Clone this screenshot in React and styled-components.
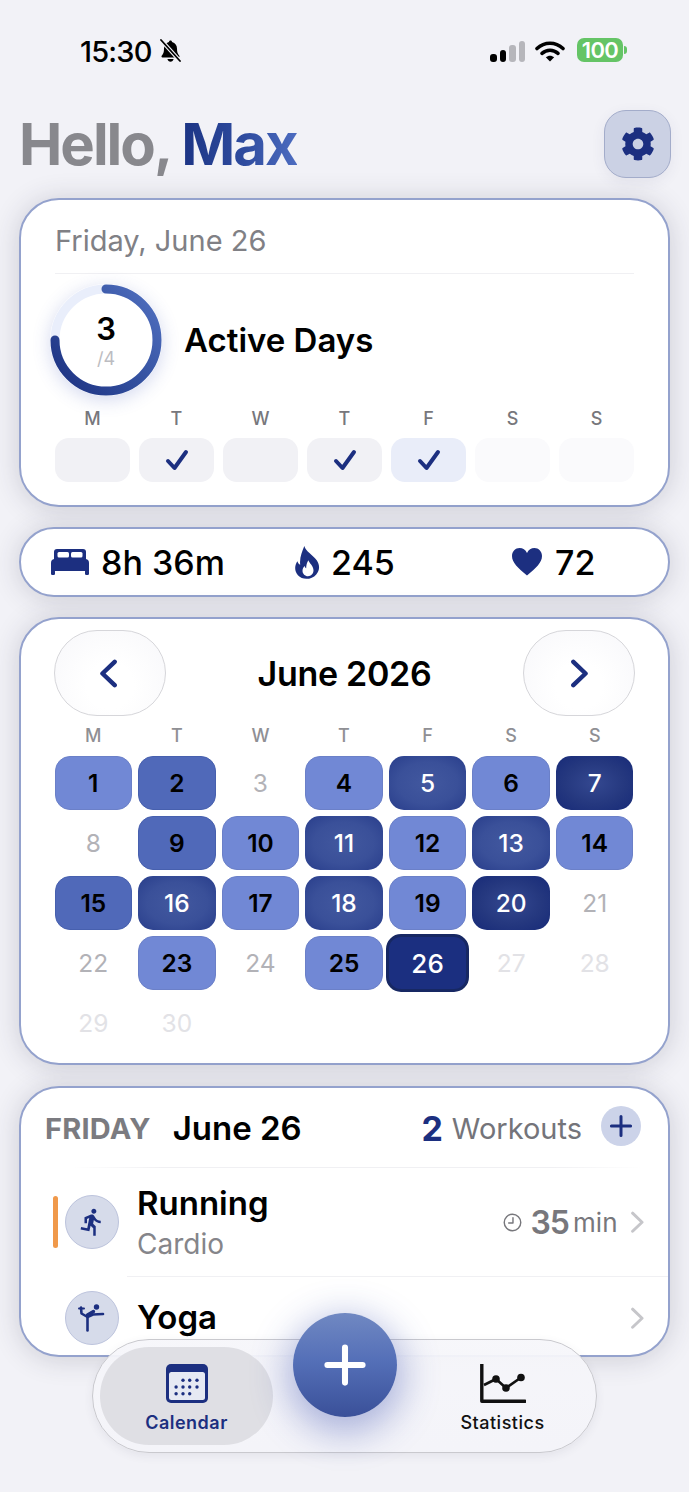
import React from "react";
import styled, { createGlobalStyle } from "styled-components";
import { FaCog } from "react-icons/fa";
import { MdDirectionsRun } from "react-icons/md";

const Global = createGlobalStyle`
  html, body { margin: 0; padding: 0; background: #f2f2f7; }
  * { box-sizing: border-box; }
  body { font-family: Inter, "Liberation Sans", sans-serif; }
`;

const NAVY = "#1c2f80";

const Page = styled.div`
  position: relative;
  width: 689px;
  height: 1492px;
  overflow: hidden;
  background: #f2f2f7;
  padding: 0 19px;
`;

const StatusBar = styled.div`
  height: 110px;
  margin: 0 -19px;
  padding: 35px 66px 0 80px;
  display: flex;
  justify-content: space-between;
  align-items: flex-start;
`;
const StatusLeft = styled.div`
  display: flex;
  align-items: center;
  gap: 7px;
  height: 32px;
`;
const Clock = styled.span`
  font-size: 29px;
  font-weight: 500;
  letter-spacing: -0.8px;
  color: #000;
`;
const StatusRight = styled.div`
  display: flex;
  align-items: center;
  height: 32px;
  gap: 10px;
`;
const Signal = styled.div`
  display: flex;
  align-items: flex-end;
  gap: 3px;
  height: 21px;
  margin-top: 1px;
`;
const SignalBar = styled.i`
  display: block;
  width: 6.5px;
  border-radius: 3px;
  height: ${(p) => p.$h}px;
  background: ${(p) => (p.$on ? "#000" : "#b6b6bb")};
`;
const Battery = styled.div`
  position: relative;
  width: 46px;
  height: 24px;
  margin-left: 2px;
  margin-top: -2px;
  border-radius: 7px;
  background: #65c466;
  color: #fff;
  font-size: 22px;
  font-weight: 600;
  letter-spacing: -0.6px;
  display: flex;
  align-items: center;
  justify-content: center;
  &::after {
    content: "";
    position: absolute;
    right: -4px;
    top: 8px;
    width: 3px;
    height: 8px;
    border-radius: 0 3px 3px 0;
    background: #65c466;
  }
`;

const Header = styled.header`
  display: flex;
  align-items: center;
  justify-content: space-between;
  height: 68px;
  margin: 0 -1px 20px 0;
`;
const Title = styled.h1`
  margin: 0;
  font-size: 58px;
  font-weight: 700;
  line-height: 68px;
  letter-spacing: -2px;
  color: #88888d;
`;
const Name = styled.span`
  background: linear-gradient(90deg, #1c3484 0%, #2f4c9f 55%, #4d6cc0 100%);
  -webkit-background-clip: text;
  background-clip: text;
  color: transparent;
`;
const GearButton = styled.div`
  width: 67px;
  height: 68px;
  border-radius: 22px;
  background: #cbd1e4;
  border: 1.5px solid #a3acca;
  box-shadow: 0 4px 14px rgba(60, 70, 120, 0.08);
  color: ${NAVY};
  display: flex;
  align-items: center;
  justify-content: center;
`;

const Card = styled.section`
  background: #fff;
  border: 2px solid #94a2cd;
  border-radius: ${(p) => p.$radius || 40}px;
  box-shadow: 0 2px 28px rgba(40, 40, 70, 0.19);
  margin-bottom: 20px;
`;

const SummaryCard = styled(Card)`
  padding: 25px 34px 23px;
  height: 309px;
`;
const DateLine = styled.div`
  font-size: 29px;
  line-height: 32px;
  color: #808085;
`;
const Rule = styled.div`
  height: 1px;
  margin-top: 16px;
  background: #f0f0f3;
`;
const RingRow = styled.div`
  display: flex;
  align-items: center;
  gap: 22px;
  margin: 10px 0 0 -5px;
  height: 112px;
`;
const RingBox = styled.div`
  position: relative;
  width: 112px;
  height: 112px;
  border-radius: 50%;
  box-shadow: 0 4px 18px rgba(60, 80, 180, 0.22);
`;
const RingText = styled.div`
  position: absolute;
  inset: 0;
  padding-top: 3px;
  display: flex;
  flex-direction: column;
  align-items: center;
  justify-content: center;
`;
const RingNum = styled.div`
  font-size: 31px;
  font-weight: 600;
  line-height: 30px;
  color: #000;
`;
const RingOf = styled.div`
  font-size: 18px;
  line-height: 20px;
  margin-top: 5px;
  color: #bcbcc1;
`;
const ActiveLabel = styled.div`
  font-size: 33px;
  font-weight: 600;
  color: #000;
`;
const WeekLabels = styled.div`
  display: grid;
  grid-template-columns: repeat(7, 1fr);
  column-gap: 9px;
  margin-top: 13px;
`;
const WeekLabel = styled.div`
  text-align: center;
  font-size: 18px;
  line-height: 20px;
  font-weight: 500;
  color: ${(p) => p.$color || "#77777c"};
`;
const WeekBoxes = styled.div`
  display: grid;
  grid-template-columns: repeat(7, 1fr);
  column-gap: 9px;
  margin-top: 9px;
`;
const WeekBox = styled.div`
  height: 44px;
  border-radius: 14px;
  background: ${(p) => p.$bg};
  display: flex;
  align-items: center;
  justify-content: center;
`;

const StatsCard = styled(Card)`
  height: 70px;
  padding-left: 30px;
  display: grid;
  grid-template-columns: 244px 217px 1fr;
  align-items: center;
`;
const Stat = styled.div`
  display: flex;
  align-items: center;
  gap: ${(p) => p.$gap}px;
`;
const StatValue = styled.span`
  font-size: 34px;
  font-weight: 500;
  color: #000;
`;

const CalendarCard = styled(Card)`
  height: 448px;
  padding: 11px 33px 0;
`;
const CalendarHead = styled.div`
  display: flex;
  align-items: center;
  justify-content: space-between;
`;
const NavButton = styled.div`
  width: 112px;
  height: 86px;
  border-radius: 44px;
  padding: ${(p) => (p.$left ? "0 4px 0 0" : "0 0 0 2px")};
  background: radial-gradient(ellipse at 50% 65%, #fff 30%, #f7f7fa 100%);
  border: 1px solid #d6d6da;
  display: flex;
  align-items: center;
  justify-content: center;
`;
const Month = styled.div`
  font-size: 34px;
  font-weight: 600;
  letter-spacing: -0.3px;
  color: #000;
`;
const DayLabels = styled.div`
  display: grid;
  grid-template-columns: repeat(7, 1fr);
  column-gap: 6px;
  margin: 10px 1.5px 10px 0.5px;
`;
const DayGrid = styled.div`
  display: grid;
  grid-template-columns: repeat(7, 1fr);
  gap: 6px;
  grid-auto-rows: 54px;
  margin: 0 1.5px 0 0.5px;
`;
const tones = {
  none: "background: transparent; color: #b2b2b7; font-weight: 400;",
  future: "background: transparent; color: #e2e2e6; font-weight: 400;",
  light:
    "background: #7188d5; border: 1.5px solid #6b80c8; color: #000; font-weight: 600;",
  mid: "background: #5069b9; border: 1.5px solid #4760ae; color: #000; font-weight: 600;",
  dark: "background: radial-gradient(ellipse at 50% 50%, #42589f 0%, #3a5099 55%, #283d8b 100%); color: #fff; font-weight: 500;",
  deep: "background: radial-gradient(ellipse at 50% 50%, #344890 0%, #25387f 55%, #172a78 100%); color: #fff; font-weight: 500;",
  today:
    "background: #1b2f80; border: 3.5px solid #172863; color: #fff; font-weight: 500; font-size: 26px; margin: -2px -2.5px;",
};
const Day = styled.div`
  border-radius: 15px;
  display: flex;
  align-items: center;
  justify-content: center;
  font-size: 24.5px;
  ${(p) => tones[p.$tone]}
`;

const WorkoutCard = styled(Card)`
  position: relative;
  height: 271px;
  overflow: hidden;
  margin-bottom: 0;
  margin-top: 21px;
`;
const WorkoutHead = styled.div`
  display: flex;
  align-items: center;
  height: 40px;
  margin: 18px 27px 21px 24px;
`;
const Weekday = styled.span`
  font-size: 29px;
  font-weight: 700;
  letter-spacing: 0.2px;
  color: #7b7b80;
  margin: 4px 22px 0 0;
`;
const WorkoutDate = styled.span`
  font-size: 33px;
  font-weight: 600;
  color: #000;
  margin-top: 4px;
`;
const Count = styled.span`
  margin: 4px 9px 0 auto;
  font-size: 34px;
  font-weight: 700;
  color: ${NAVY};
`;
const CountLabel = styled.span`
  font-size: 29px;
  color: #74747a;
  margin: 4px 19px 0 0;
`;
const AddMini = styled.div`
  width: 40px;
  height: 40px;
  border-radius: 50%;
  background: #ccd3e9;
  display: flex;
  align-items: center;
  justify-content: center;
`;
const FadeRule = styled.div`
  height: 1px;
  background: linear-gradient(90deg, transparent 8%, #f0f0f3 22%, #f0f0f3 82%, transparent 96%);
`;
const Row = styled.div`
  display: flex;
  align-items: center;
  height: ${(p) => p.$h}px;
  padding: 0 23px 0 32px;
`;
const RowRule = styled.div`
  height: 1px;
  margin-left: 106px;
  background: #f0f0f3;
`;
const Accent = styled.div`
  width: 5px;
  height: 52px;
  border-radius: 3px;
  margin-right: 7px;
  background: ${(p) => p.$color};
`;
const WorkoutIcon = styled.div`
  width: 54px;
  height: 54px;
  border-radius: 50%;
  background: #d6dbea;
  border: 1.5px solid #bcc3dc;
  display: flex;
  align-items: center;
  justify-content: center;
  margin-right: 18px;
  color: ${NAVY};
`;
const RowText = styled.div`
  flex: 1;
  margin-top: ${(p) => p.$shift}px;
`;
const RowName = styled.div`
  font-size: 33px;
  line-height: 40px;
  font-weight: 600;
  color: #000;
`;
const RowSub = styled.div`
  font-size: 28px;
  line-height: 38px;
  margin-top: 2px;
  color: #85858a;
`;
const Duration = styled.div`
  display: flex;
  align-items: center;
  gap: 8px;
  margin-right: 12px;
`;
const DurationNum = styled.span`
  font-size: 32px;
  font-weight: 600;
  letter-spacing: -0.9px;
  color: #77777c;
`;
const DurationUnit = styled.span`
  font-size: 26px;
  color: #77777c;
  margin-left: -4px;
`;

const BottomNav = styled.nav`
  position: absolute;
  left: 92px;
  top: 1339px;
  width: 505px;
  height: 114px;
  border-radius: 57px;
  padding: 7px;
  display: flex;
  justify-content: space-between;
  background: linear-gradient(180deg, rgba(246, 246, 250, 0.94), rgba(244, 244, 249, 0.97));
  border: 1px solid #c9c9ce;
  box-shadow: 0 3px 10px rgba(60, 60, 90, 0.08);
`;
const Tab = styled.div`
  width: 173px;
  height: 98px;
  border-radius: 49px;
  padding-top: 17px;
  display: flex;
  flex-direction: column;
  align-items: center;
  background: ${(p) => (p.$active ? "#dfdfe4" : "transparent")};
`;
const TabLabel = styled.div`
  margin-top: 9px;
  font-size: 18px;
  line-height: 22px;
  font-weight: ${(p) => (p.$active ? 600 : 500)};
  letter-spacing: 0.5px;
  color: ${(p) => (p.$active ? NAVY : "#111")};
`;
const Fab = styled.div`
  position: absolute;
  left: 200px;
  top: -27px;
  width: 104px;
  height: 104px;
  border-radius: 50%;
  background: linear-gradient(180deg, #7088c2 0%, #5570b8 45%, #3a5099 100%);
  box-shadow: 0 10px 36px 6px rgba(50, 70, 170, 0.38);
  display: flex;
  align-items: center;
  justify-content: center;
`;

const Chevron = ({ dir, color = NAVY, w = 20, h = 29, sw = 4 }) => (
  <svg width={w} height={h} viewBox="0 0 18 26" fill="none">
    <path
      d={dir === "left" ? "M15 2.5 4 13l11 10.5" : "M3 2.5 14 13 3 23.5"}
      stroke={color}
      strokeWidth={sw}
      strokeLinecap="round"
      strokeLinejoin="round"
    />
  </svg>
);

const Check = () => (
  <svg width="24" height="22" viewBox="0 0 24 22" fill="none">
    <path d="M3 12l6.5 7L21 3" stroke={NAVY} strokeWidth="4" strokeLinecap="round" strokeLinejoin="round" />
  </svg>
);

const Plus = ({ size, sw, color }) => (
  <svg width={size} height={size} viewBox="0 0 40 40" fill="none">
    <path d="M20 4v32M4 20h32" stroke={color} strokeWidth={sw} strokeLinecap="round" />
  </svg>
);

const BellOff = () => (
  <svg width="23" height="24" viewBox="0 0 23 24">
    <path d="M11.5 1.5c-.9 0-1.5.6-1.6 1.5C6.8 3.8 5 6.4 5 9.6c0 3.6-.6 5.4-2.3 7.2-.5.6-.2 1.6.7 1.6h16.2c.9 0 1.2-1 .7-1.6-1.7-1.8-2.3-3.6-2.3-7.2 0-3.2-1.8-5.8-4.9-6.6-.1-.9-.7-1.5-1.6-1.5z" fill="#000" />
    <path d="M8.4 20c.3 1.5 1.6 2.7 3.1 2.7s2.8-1.2 3.1-2.7z" fill="#000" />
    <path d="M2 1l19 21" stroke="#f2f2f7" strokeWidth="4" />
    <path d="M2 1l19 21" stroke="#000" strokeWidth="1.8" strokeLinecap="round" />
  </svg>
);

const Wifi = () => (
  <svg width="30" height="22" viewBox="0 0 30 22" fill="none">
    <path d="M2 8.5C9.5 1.5 20.5 1.5 28 8.5" stroke="#000" strokeWidth="3.6" strokeLinecap="round" />
    <path d="M7 13.3C11.7 9.2 18.3 9.2 23 13.3" stroke="#000" strokeWidth="3.6" strokeLinecap="round" />
    <path d="M10.8 17.2c2.5-2.1 5.9-2.1 8.4 0L15 21.5z" fill="#000" />
  </svg>
);

const Ring = () => (
  <svg width="112" height="112" viewBox="0 0 112 112" fill="none">
    <defs>
      <linearGradient id="ringGrad" x1="0" y1="1" x2="1" y2="0.2">
        <stop offset="0" stopColor="#1c3080" />
        <stop offset="0.55" stopColor="#33509f" />
        <stop offset="1" stopColor="#4c6bbb" />
      </linearGradient>
    </defs>
    <circle cx="56" cy="56" r="51" stroke="#e9eefb" strokeWidth="9" />
    <path d="M56 5A51 51 0 1 1 5 56" stroke="url(#ringGrad)" strokeWidth="9" strokeLinecap="round" />
  </svg>
);

const Bed = () => (
  <svg width="38" height="26" viewBox="0 0 38 26">
    <path d="M6 0h26a3 3 0 0 1 3 3v8H3V3a3 3 0 0 1 3-3z" fill={NAVY} />
    <rect x="6.5" y="3" width="11.5" height="5.5" rx="1.5" fill="#fff" />
    <rect x="20" y="3" width="11.5" height="5.5" rx="1.5" fill="#fff" />
    <path d="M4 10h30a4 4 0 0 1 4 4v8H0v-8a4 4 0 0 1 4-4z" fill={NAVY} />
    <rect x="0" y="21" width="4" height="5" rx="1.2" fill={NAVY} />
    <rect x="34" y="21" width="4" height="5" rx="1.2" fill={NAVY} />
  </svg>
);

const Flame = () => (
  <svg width="26" height="33" viewBox="0 0 28 36">
    <path d="M10 0c1.5 6 9 9.5 13.5 15.5 3.5 5 3.5 11-.5 15.5-5 6-15 6.500-20 1C-1 27.500-.8 21 2.500 16.500c.6 2 1.500 3.200 3 4C4.500 13 7.500 6.500 10 0z" fill={NAVY} />
    <path d="M14.500 15.500c.5 3 5.500 6 5.500 11 0 3.800-2.800 6.500-6 6.500s-6-2.600-6-6c0-2.300 1-4 2.500-5.300.2 1.300.7 2.100 1.500 2.600 0-3.200.8-6.300 2.500-8.800z" fill="#fff" />
  </svg>
);

const Heart = () => (
  <svg width="30" height="28" viewBox="0 0 30 28">
    <path d="M15 27.5C6 20 0 14.5 0 8 0 3.5 3.5 0 7.5 0 10.8 0 13.5 1.8 15 5 16.5 1.8 19.2 0 22.5 0 26.5 0 30 3.5 30 8c0 6.5-6 12-15 19.5z" fill={NAVY} />
  </svg>
);

const ClockIcon = () => (
  <svg width="19" height="19" viewBox="0 0 20 20" fill="none">
    <circle cx="10" cy="10" r="8.7" stroke="#77777c" strokeWidth="1.5" />
    <path d="M10.5 5v5.5H6" stroke="#77777c" strokeWidth="1.5" strokeLinecap="round" strokeLinejoin="round" />
  </svg>
);

const YogaIcon = () => (
  <svg width="28" height="28" viewBox="0 0 28 28" fill="none">
    <circle cx="18.5" cy="3" r="2.7" fill={NAVY} />
    <path d="M9.5 11v15.500" stroke={NAVY} strokeWidth="2.6" strokeLinecap="round" />
    <path d="M3 3.5 3.5 9.5 9.5 13 15 10.5 25 10" stroke={NAVY} strokeWidth="2.6" strokeLinecap="round" strokeLinejoin="round" />
    <path d="M9.5 11 15.5 7.5" stroke={NAVY} strokeWidth="3.4" strokeLinecap="round" />
    <path d="M1 4.5h5" stroke={NAVY} strokeWidth="2" strokeLinecap="round" />
  </svg>
);

const CalendarIcon = () => {
  const dots = [
    [17, 16.2], [23.7, 16.2], [31, 16.2],
    [10.1, 23], [17, 23], [23.7, 23], [31, 23],
    [10.1, 29.8], [17, 29.8], [23.7, 29.8],
  ];
  return (
    <svg width="42" height="39" viewBox="0 0 42 39">
      <rect x="0" y="0" width="42" height="39" rx="5" fill={NAVY} />
      <rect x="3" y="8" width="36" height="28" rx="2.5" fill="#e6e9f3" />
      {dots.map(([x, y]) => (
        <circle key={`${x}-${y}`} cx={x} cy={y} r="1.7" fill={NAVY} />
      ))}
    </svg>
  );
};

const ChartIcon = () => (
  <svg width="46" height="39" viewBox="0 0 46 39" fill="none">
    <path d="M1.8 0v37.2H45" stroke="#111" strokeWidth="3.4" strokeLinecap="round" strokeLinejoin="round" />
    <path d="M4 21 16 15 26 24 41 13.5" stroke="#111" strokeWidth="2.6" strokeLinejoin="round" />
    <circle cx="16" cy="15" r="3.8" fill="#111" />
    <circle cx="26" cy="24" r="3.8" fill="#111" />
    <circle cx="41" cy="13.5" r="3.8" fill="#111" />
  </svg>
);

const WEEK = ["M", "T", "W", "T", "F", "S", "S"];
const WEEK_STATE = [
  { bg: "#f1f1f5" },
  { bg: "#f1f1f5", check: true },
  { bg: "#f1f1f5" },
  { bg: "#f1f1f5", check: true },
  { bg: "#e9edf9", check: true },
  { bg: "#fafafc" },
  { bg: "#fafafc" },
];
const DAYS = [
  "light", "mid", "none", "light", "dark", "light", "deep",
  "none", "mid", "light", "dark", "light", "dark", "light",
  "mid", "dark", "light", "dark", "light", "deep", "none",
  "none", "light", "none", "light", "today", "future", "future",
  "future", "future",
];

export default function App() {
  return (
    <Page>
      <Global />
      <StatusBar>
        <StatusLeft>
          <Clock>15:30</Clock>
          <BellOff />
        </StatusLeft>
        <StatusRight>
          <Signal>
            {[8, 12, 17, 21].map((h, i) => (
              <SignalBar key={h} $h={h} $on={i < 2} />
            ))}
          </Signal>
          <Wifi />
          <Battery>100</Battery>
        </StatusRight>
      </StatusBar>

      <Header>
        <Title>
          Hello, <Name>Max</Name>
        </Title>
        <GearButton>
          <FaCog size={34} />
        </GearButton>
      </Header>

      <SummaryCard>
        <DateLine>Friday, June 26</DateLine>
        <Rule />
        <RingRow>
          <RingBox>
            <Ring />
            <RingText>
              <RingNum>3</RingNum>
              <RingOf>/4</RingOf>
            </RingText>
          </RingBox>
          <ActiveLabel>Active Days</ActiveLabel>
        </RingRow>
        <WeekLabels>
          {WEEK.map((d, i) => (
            <WeekLabel key={i}>{d}</WeekLabel>
          ))}
        </WeekLabels>
        <WeekBoxes>
          {WEEK_STATE.map((s, i) => (
            <WeekBox key={i} $bg={s.bg}>
              {s.check && <Check />}
            </WeekBox>
          ))}
        </WeekBoxes>
      </SummaryCard>

      <StatsCard $radius={36}>
        <Stat $gap={12}>
          <Bed />
          <StatValue>8h 36m</StatValue>
        </Stat>
        <Stat $gap={10}>
          <Flame />
          <StatValue>245</StatValue>
        </Stat>
        <Stat $gap={13}>
          <Heart />
          <StatValue>72</StatValue>
        </Stat>
      </StatsCard>

      <CalendarCard>
        <CalendarHead>
          <NavButton $left>
            <Chevron dir="left" />
          </NavButton>
          <Month>June 2026</Month>
          <NavButton>
            <Chevron dir="right" />
          </NavButton>
        </CalendarHead>
        <DayLabels>
          {WEEK.map((d, i) => (
            <WeekLabel key={i} $color="#8f8f94">
              {d}
            </WeekLabel>
          ))}
        </DayLabels>
        <DayGrid>
          {DAYS.map((tone, i) => (
            <Day key={i} $tone={tone}>
              {i + 1}
            </Day>
          ))}
        </DayGrid>
      </CalendarCard>

      <WorkoutCard>
        <WorkoutHead>
          <Weekday>FRIDAY</Weekday>
          <WorkoutDate>June 26</WorkoutDate>
          <Count>2</Count>
          <CountLabel>Workouts</CountLabel>
          <AddMini>
            <Plus size={24} sw={5} color={NAVY} />
          </AddMini>
        </WorkoutHead>
        <FadeRule />
        <Row $h={108}>
          <Accent $color="#f0994a" />
          <WorkoutIcon>
            <MdDirectionsRun size={30} />
          </WorkoutIcon>
          <RowText $shift={2}>
            <RowName>Running</RowName>
            <RowSub>Cardio</RowSub>
          </RowText>
          <Duration>
            <ClockIcon />
            <DurationNum>35</DurationNum>
            <DurationUnit>min</DurationUnit>
          </Duration>
          <Chevron dir="right" color="#c6c6ca" w={15.5} h={22.4} sw={3.4} />
        </Row>
        <RowRule />
        <Row $h={82}>
          <Accent $color="transparent" />
          <WorkoutIcon>
            <YogaIcon />
          </WorkoutIcon>
          <RowText $shift={-2}>
            <RowName>Yoga</RowName>
          </RowText>
          <Chevron dir="right" color="#c6c6ca" w={15.5} h={22.4} sw={3.4} />
        </Row>
      </WorkoutCard>

      <BottomNav>
        <Tab $active>
          <CalendarIcon />
          <TabLabel $active>Calendar</TabLabel>
        </Tab>
        <Fab>
          <Plus size={44} sw={5.5} color="#fff" />
        </Fab>
        <Tab>
          <ChartIcon />
          <TabLabel>Statistics</TabLabel>
        </Tab>
      </BottomNav>
    </Page>
  );
}
